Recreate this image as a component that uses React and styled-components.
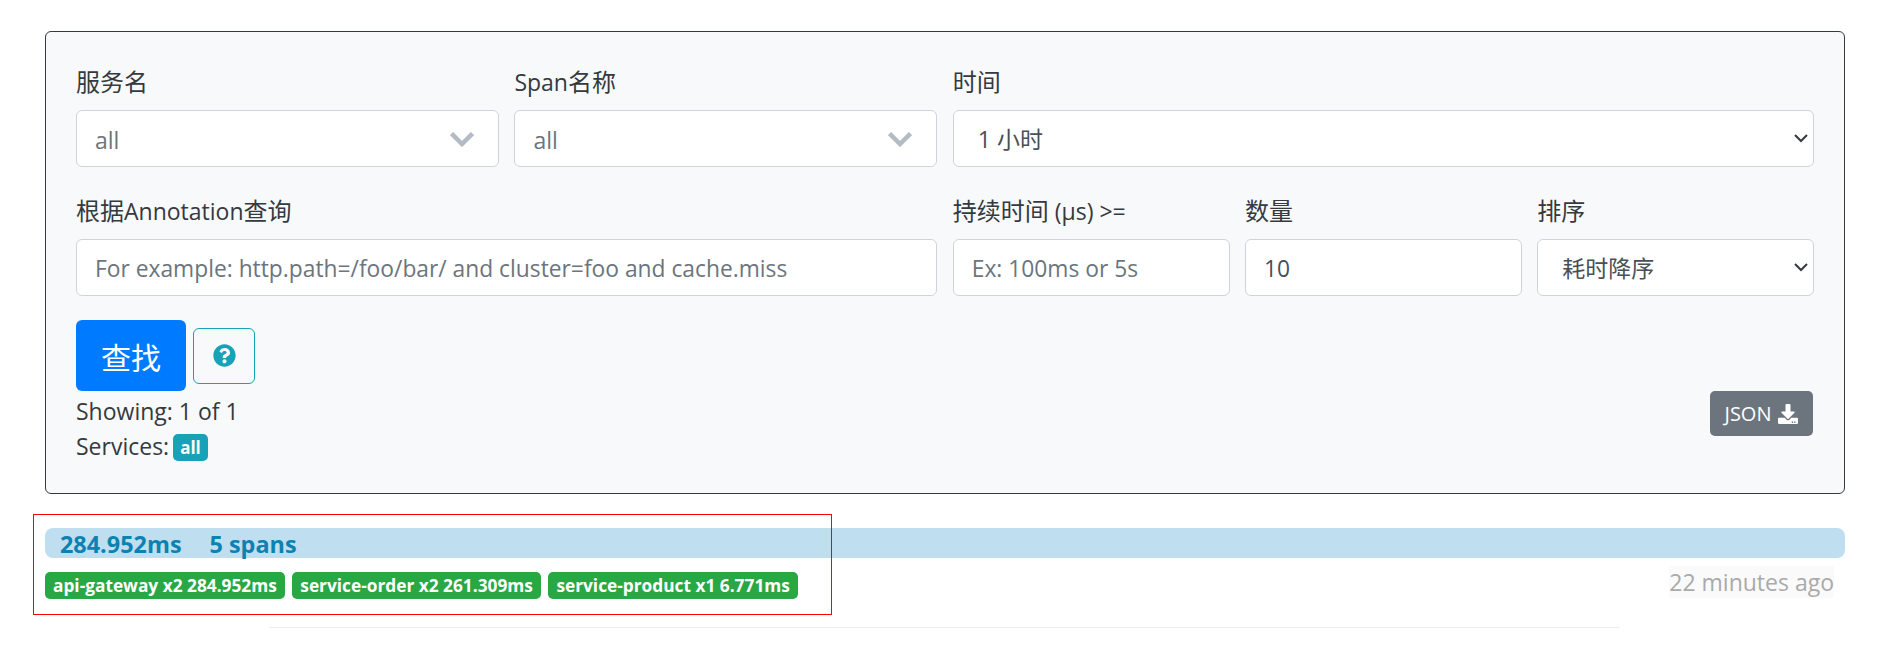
import styled, { createGlobalStyle } from 'styled-components';
import { FaQuestionCircle, FaDownload } from 'react-icons/fa';

const sans = '"Open Sans", "Noto Sans CJK SC", sans-serif';

const selectArrow =
  "data:image/svg+xml,%3Csvg xmlns='http://www.w3.org/2000/svg' width='14' height='9' fill='none'%3E%3Cpath d='M1 1l6 6 6-6' stroke='%23343a40' stroke-width='2'/%3E%3C/svg%3E";

const GlobalStyle = createGlobalStyle`
  html, body {
    margin: 0;
    padding: 0;
    background: #fff;
    color: #212529;
    font-family: ${sans};
    font-size: 23px;
  }
`;

const Page = styled.div`
  position: relative;
  box-sizing: border-box;
  width: 1880px;
  height: 662px;
  padding: 31px 35px 0 45px;
  overflow: hidden;
`;

const SearchPanel = styled.div`
  box-sizing: border-box;
  height: 463px;
  padding: 30px 30px 0;
  background: #f8f9fa;
  border: 1px solid #343a40;
  border-radius: 6px;
`;

const FormGrid = styled.div`
  display: grid;
  grid-template-columns: repeat(12, 1fr);
  column-gap: 15.5px;
  row-gap: 24px;
`;

const Field = styled.div`
  grid-column: span ${(p) => p.$span};
  display: flex;
  flex-direction: column;
`;

const Label = styled.label`
  height: 48px;
  line-height: 40px;
  white-space: nowrap;
  color: #343a40;
`;

const Han = styled.span`
  font-size: 24px;
`;

const TextInput = styled.input`
  box-sizing: border-box;
  width: 100%;
  height: 57px;
  padding: 1px 18px 0;
  font-family: ${sans};
  font-size: 22.8px;
  color: #495057;
  background: #fff;
  border: 1px solid #ced4da;
  border-radius: 6px;
  outline: none;

  &::placeholder {
    color: #6c757d;
    opacity: 1;
  }
`;

const NativeSelect = styled.select`
  box-sizing: border-box;
  width: 100%;
  height: 57px;
  padding: 0 24px;
  font-family: ${sans};
  font-size: 23px;
  color: #495057;
  background: #fff url("${selectArrow}") no-repeat right 5px center;
  border: 1px solid #ced4da;
  border-radius: 6px;
  outline: none;
  appearance: none;
`;

const ComboBox = styled.div`
  box-sizing: border-box;
  display: flex;
  align-items: center;
  justify-content: space-between;
  height: 57px;
  padding: 2px 24px 0 18px;
  font-size: 23px;
  color: #6c757d;
  background: #fff;
  border: 1px solid #ced4da;
  border-radius: 6px;
`;

const ActionRow = styled.div`
  display: flex;
  align-items: center;
  gap: 7px;
  margin-top: 24px;
`;

const SearchButton = styled.button`
  width: 110px;
  height: 71px;
  padding: 0;
  font-family: ${sans};
  font-size: 30px;
  color: #fff;
  background: #007bff;
  border: none;
  border-radius: 6px;
`;

const HelpButton = styled.button`
  display: flex;
  align-items: center;
  justify-content: center;
  width: 62px;
  height: 56px;
  padding: 0;
  font-size: 23px;
  color: #17a2b8;
  background: transparent;
  border: 1px solid #17a2b8;
  border-radius: 6px;
`;

const SummaryRow = styled.div`
  display: flex;
  align-items: flex-start;
  justify-content: space-between;
`;

const SummaryText = styled.div`
  line-height: 35px;
  padding-top: 3px;
  color: #343a40;
`;

const ServiceBadge = styled.span`
  display: inline-block;
  margin-left: -2px;
  padding: 0 7px;
  font-size: 17px;
  line-height: 27px;
  font-weight: 700;
  vertical-align: 1px;
  color: #fff;
  background: #17a2b8;
  border-radius: 5px;
`;

const JsonButton = styled.button`
  display: flex;
  align-items: center;
  justify-content: center;
  gap: 7px;
  width: 103px;
  height: 45px;
  margin-right: 1px;
  padding: 0;
  font-family: ${sans};
  font-size: 20px;
  color: #fff;
  background: #6c757d;
  border: none;
  border-radius: 5px;
`;

const TraceBar = styled.div`
  box-sizing: border-box;
  display: flex;
  align-items: center;
  gap: 28px;
  height: 30px;
  margin-top: 34px;
  padding: 2px 0 0 15px;
  font-size: 23.4px;
  font-weight: 700;
  color: #0b82b2;
  background: #bfdeef;
  border-radius: 8px;
`;

const TraceMeta = styled.div`
  display: flex;
  align-items: flex-start;
  justify-content: space-between;
  padding-top: 8px;
`;

const BadgeList = styled.div`
  display: flex;
  gap: 7.5px;
  padding-top: 6px;
`;

const DurationBadge = styled.span`
  box-sizing: border-box;
  height: 27px;
  padding: 0 8px;
  font-size: 17.3px;
  line-height: 27px;
  font-weight: 700;
  white-space: nowrap;
  color: #fff;
  background: #28a745;
  border-radius: 5px;
`;

const TimeAgo = styled.span`
  margin-right: 11px;
  font-size: 23px;
  line-height: 32px;
  color: #aaa;
  background: #fafafa;
`;

const Divider = styled.hr`
  width: 1351px;
  height: 1px;
  margin: 28px 0 0 224px;
  background: #eee;
  border: none;
`;

// red annotation box drawn over the screenshot
const Highlight = styled.div`
  position: absolute;
  left: 33px;
  top: 514px;
  width: 799px;
  height: 101px;
  box-sizing: border-box;
  border: 1px solid #f00;
  pointer-events: none;
`;

const Chevron = () => (
  <svg width="24" height="15" viewBox="0 0 24 15" fill="none">
    <path d="M1.5 1.5 L12 12 L22.5 1.5" stroke="#b3bbc4" strokeWidth="4.5" />
  </svg>
);

export default function App() {
  return (
    <Page>
      <GlobalStyle />
      <SearchPanel>
        <FormGrid>
          <Field $span={3}>
            <Label><Han>服务名</Han></Label>
            <ComboBox>all<Chevron /></ComboBox>
          </Field>
          <Field $span={3}>
            <Label>Span<Han>名称</Han></Label>
            <ComboBox>all<Chevron /></ComboBox>
          </Field>
          <Field $span={6}>
            <Label><Han>时间</Han></Label>
            <NativeSelect defaultValue="1h"><option value="1h">1 小时</option></NativeSelect>
          </Field>
          <Field $span={6}>
            <Label><Han>根据</Han>Annotation<Han>查询</Han></Label>
            <TextInput placeholder="For example: http.path=/foo/bar/ and cluster=foo and cache.miss" />
          </Field>
          <Field $span={2}>
            <Label><Han>持续时间</Han> (μs) &gt;=</Label>
            <TextInput placeholder="Ex: 100ms or 5s" />
          </Field>
          <Field $span={2}>
            <Label><Han>数量</Han></Label>
            <TextInput defaultValue="10" />
          </Field>
          <Field $span={2}>
            <Label><Han>排序</Han></Label>
            <NativeSelect defaultValue="d"><option value="d">耗时降序</option></NativeSelect>
          </Field>
        </FormGrid>
        <ActionRow>
          <SearchButton>查找</SearchButton>
          <HelpButton><FaQuestionCircle /></HelpButton>
        </ActionRow>
        <SummaryRow>
          <SummaryText>
            Showing: 1 of 1
            <br />
            Services: <ServiceBadge>all</ServiceBadge>
          </SummaryText>
          <JsonButton>JSON <FaDownload /></JsonButton>
        </SummaryRow>
      </SearchPanel>
      <TraceBar>
        <span>284.952ms</span>
        <span>5 spans</span>
      </TraceBar>
      <TraceMeta>
        <BadgeList>
          <DurationBadge>api-gateway x2 284.952ms</DurationBadge>
          <DurationBadge>service-order x2 261.309ms</DurationBadge>
          <DurationBadge>service-product x1 6.771ms</DurationBadge>
        </BadgeList>
        <TimeAgo>22 minutes ago</TimeAgo>
      </TraceMeta>
      <Divider />
      <Highlight />
    </Page>
  );
}
